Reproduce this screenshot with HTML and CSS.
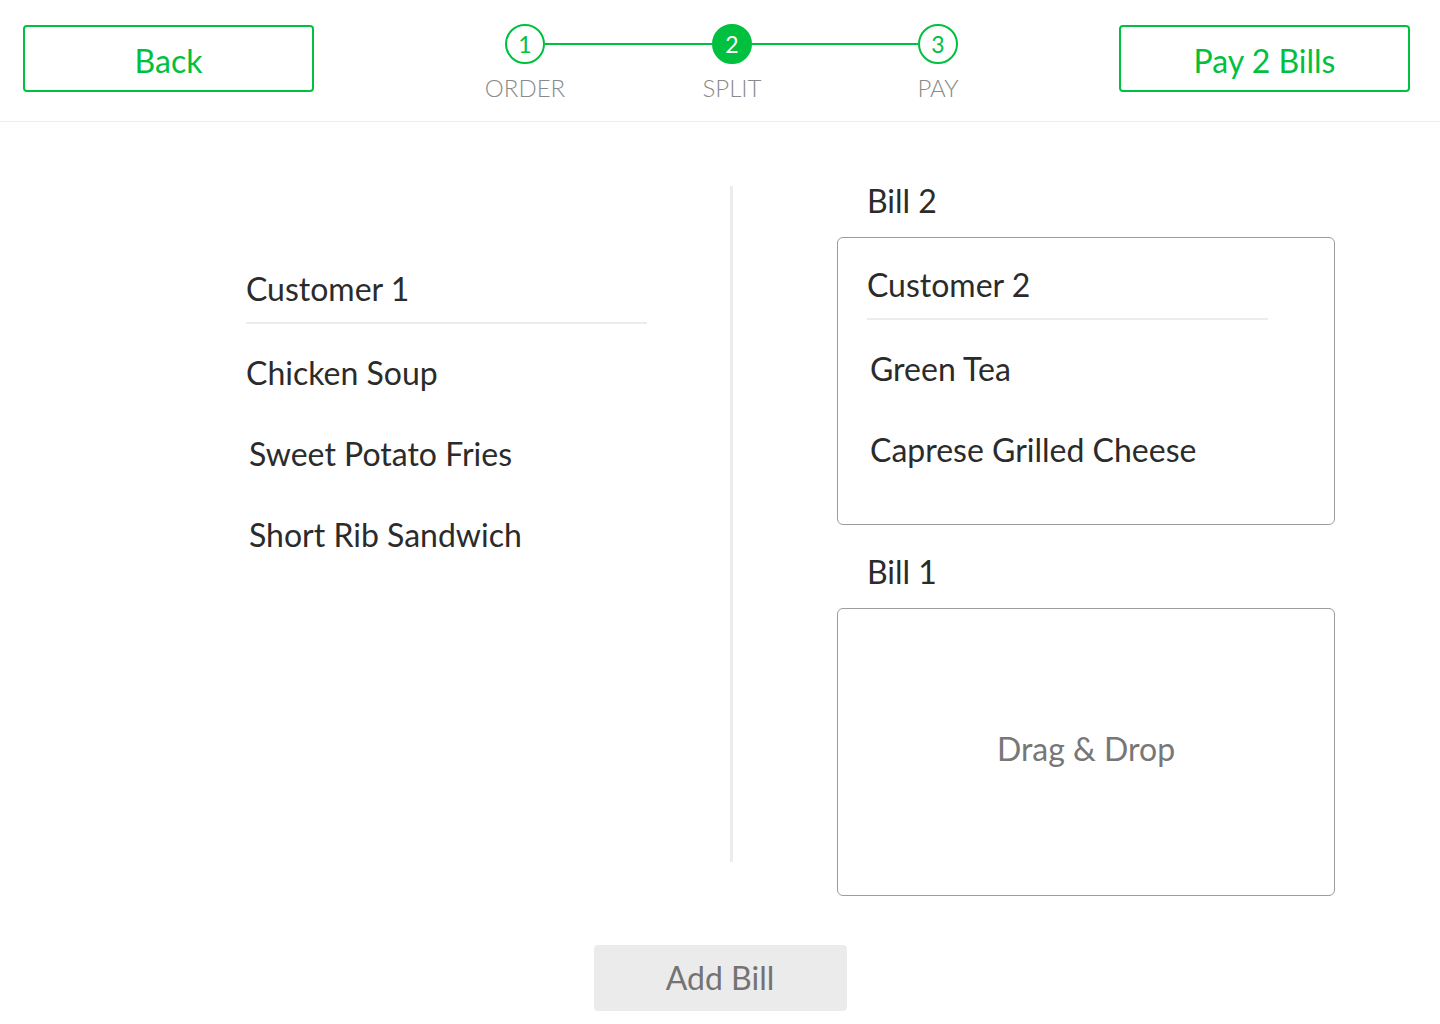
FILE: index.html
```html
<!DOCTYPE html>
<html lang="en">
<head>
<meta charset="utf-8">
<title>Split Bill</title>
<link rel="stylesheet" href="styles.css">
</head>
<body>
<header class="topbar">
  <button class="btn-outline">Back</button>
  <div class="stepper">
    <div class="step-circle">1</div>
    <div class="step-line"></div>
    <div class="step-circle active">2</div>
    <div class="step-line"></div>
    <div class="step-circle">3</div>
    <div class="step-label">ORDER</div>
    <div></div>
    <div class="step-label">SPLIT</div>
    <div></div>
    <div class="step-label">PAY</div>
  </div>
  <button class="btn-outline btn-right">Pay 2 Bills</button>
</header>

<main class="split">
  <section class="unassigned">
    <div class="customer">
      <div class="customer-name">Customer 1</div>
      <ul class="items">
        <li class="item item-first">Chicken Soup</li>
        <li class="item">Sweet Potato Fries</li>
        <li class="item">Short Rib Sandwich</li>
      </ul>
    </div>
  </section>

  <div class="vdivider"></div>

  <section class="bills">
    <div class="bill">
      <div class="bill-title">Bill 2</div>
      <div class="bill-box">
        <div class="customer">
          <div class="customer-name">Customer 2</div>
          <ul class="items">
            <li class="item">Green Tea</li>
            <li class="item">Caprese Grilled Cheese</li>
          </ul>
        </div>
      </div>
    </div>
    <div class="bill">
      <div class="bill-title">Bill 1</div>
      <div class="bill-box bill-empty">
        <span class="drop-hint">Drag &amp; Drop</span>
      </div>
    </div>
  </section>
</main>

<footer class="footer">
  <button class="btn-grey">Add Bill</button>
</footer>
</body>
</html>
```

FILE: styles.css
```css
* { box-sizing: border-box; }

html, body {
  margin: 0;
  padding: 0;
  background: #ffffff;
}

body {
  font-family: "Lato", "Open Sans", "Liberation Sans", sans-serif;
  color: #2b2b2b;
  width: 1440px;
  height: 1024px;
  overflow: hidden;
}

button {
  font-family: inherit;
  cursor: pointer;
}

/* ---------- Top bar ---------- */
.topbar {
  display: flex;
  align-items: flex-start;
  height: 122px;
  padding: 0 30px 0 23px;
  border-bottom: 1px solid #ececec;
}

.btn-outline {
  margin-top: 25px;
  width: 291px;
  height: 67px;
  border: 2px solid #00c13f;
  border-radius: 4px;
  background: #fff;
  color: #00c13f;
  font-size: 32px;
  line-height: 40px;
  padding: 4px 0 0;
}

.btn-right { margin-left: auto; }

.stepper {
  margin-left: 191px;
  margin-top: 24px;
  display: grid;
  grid-template-columns: 40px 167px 40px 166px 40px;
  grid-template-rows: 40px auto;
  row-gap: 10px;
}

.step-circle {
  width: 40px;
  height: 40px;
  border: 2px solid #00c13f;
  border-radius: 50%;
  color: #00c13f;
  font-size: 23px;
  line-height: 36px;
  text-align: center;
}

.step-circle.active {
  background: #00c13f;
  color: #fff;
}

.step-line {
  align-self: center;
  height: 2px;
  background: #00c13f;
}

.step-label {
  justify-self: center;
  font-size: 24px;
  line-height: 28px;
  font-weight: 300;
  color: #8a8a8a;
  white-space: nowrap;
}

/* ---------- Main split area ---------- */
.split {
  display: flex;
  align-items: flex-start;
  padding-left: 246px;
}

.unassigned {
  width: 401px;
  margin-top: 147px;
}

.customer { width: 401px; }

.customer-name {
  font-size: 32px;
  line-height: 40px;
  padding-bottom: 13px;
  border-bottom: 2px solid #ececec;
}

.items {
  list-style: none;
  margin: 0;
  padding: 0;
}

.item {
  font-size: 32px;
  line-height: 40px;
  padding: 29px 0 12px 3px;
}

.item-first { padding-left: 0; }

.vdivider {
  width: 3px;
  height: 676px;
  margin-top: 64px;
  margin-left: 83px;
  background: #ececec;
}

.bills {
  margin-left: 104px;
  margin-top: 59px;
  width: 498px;
}

.bill + .bill { margin-top: 27px; }

.bill-title {
  font-size: 32px;
  line-height: 40px;
  padding-left: 30px;
  margin-bottom: 16px;
}

.bill-box {
  height: 288px;
  border: 1px solid #9c9c9c;
  border-radius: 6px;
  padding: 27px 0 0 29px;
}

.bill-empty {
  display: flex;
  align-items: center;
  justify-content: center;
  padding: 0 0 6px;
}

.drop-hint {
  font-size: 32px;
  line-height: 40px;
  color: #777;
}

/* ---------- Footer ---------- */
.footer {
  display: flex;
  justify-content: center;
  margin-top: 49px;
}

.btn-grey {
  width: 253px;
  height: 66px;
  border: none;
  border-radius: 4px;
  background: #ebebeb;
  color: #737373;
  font-size: 32px;
  line-height: 40px;
  padding: 0;
}
```
